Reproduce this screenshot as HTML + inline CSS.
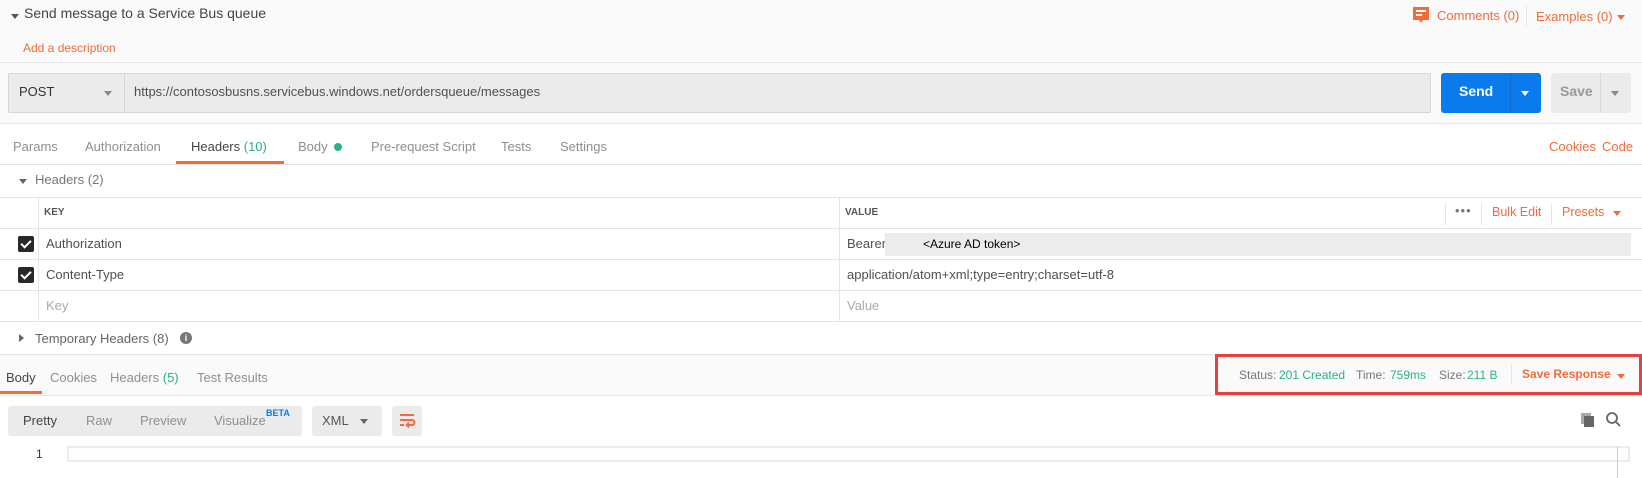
<!DOCTYPE html>
<html><head><meta charset="utf-8"><style>
*{margin:0;padding:0;box-sizing:border-box}
body{width:1642px;height:478px;overflow:hidden;background:#fff;font-family:"Liberation Sans",sans-serif;font-size:13px;color:#505050;position:relative}
.a{position:absolute;white-space:nowrap}
.o{color:#f26b3a}.g{color:#26b47f}.m{color:#8f8f8f}
.hl{position:absolute;height:1px;background:#e5e5e5}
.vl{position:absolute;width:1px;background:#e5e5e5}
.cb{position:absolute;width:16px;height:16px;background:#282828;border-radius:2px}
.cb:after{content:"";position:absolute;left:5px;top:2px;width:4px;height:8px;border:solid #fff;border-width:0 2px 2px 0;transform:rotate(45deg)}
.tri{position:absolute;width:0;height:0;border-left:4px solid transparent;border-right:4px solid transparent;border-top:5px solid #666}
</style></head><body>
<div class="a" style="left:0;top:0;width:1642px;height:65px;background:#fafafa"></div>
<div class="tri" style="left:11px;top:14px;border-top-color:#555"></div>
<div class="a" style="left:24px;top:5px;font-size:14px;color:#444">Send message to a Service Bus queue</div>
<div class="a o" style="left:23px;top:41px;font-size:12px">Add a description</div>
<svg class="a" style="left:1413px;top:7px" width="16" height="18"><path d="M0 0h16v13h-6l-2 3-2-3H0z" fill="#f26b3a"/><rect x="3" y="3" width="10" height="2" fill="#fff"/><rect x="3" y="7" width="6" height="2" fill="#fff"/></svg>
<div class="a o" style="left:1437px;top:8px">Comments (0)</div>
<div class="vl" style="left:1526px;top:5px;height:22px"></div>
<div class="a o" style="left:1536px;top:9px">Examples (0)</div>
<div class="tri" style="left:1617px;top:15px;border-top-color:#f26b3a"></div>
<div class="hl" style="left:0;top:62px;width:1642px;background:#e8e8e8"></div>
<div class="a" style="left:0;top:63px;width:1642px;height:60px;background:#fafafa"></div>
<div class="a" style="left:8px;top:73px;width:1423px;height:40px;background:#ebebeb;border:1px solid #d6d6d6;border-radius:2px"></div>
<div class="vl" style="left:124px;top:74px;height:38px;background:#d6d6d6"></div>
<div class="a" style="left:19px;top:84px;color:#333">POST</div>
<div class="tri" style="left:104px;top:91px;border-top-color:#888"></div>
<div class="a" style="left:134px;top:84px;color:#505050">https://contososbusns.servicebus.windows.net/ordersqueue/messages</div>
<div class="a" style="left:1441px;top:73px;width:100px;height:40px;background:#097bed;border-radius:3px"></div>
<div class="vl" style="left:1510px;top:73px;height:40px;background:#0a6bd0"></div>
<div class="a" style="left:1459px;top:83px;color:#fff;font-weight:bold;font-size:14px">Send</div>
<div class="tri" style="left:1521px;top:91px;border-top-color:#fff"></div>
<div class="a" style="left:1551px;top:73px;width:80px;height:40px;background:#ebebeb;border-radius:3px"></div>
<div class="vl" style="left:1600px;top:73px;height:40px;background:#d9d9d9"></div>
<div class="a" style="left:1560px;top:83px;color:#999;font-size:14px;font-weight:bold">Save</div>
<div class="tri" style="left:1611px;top:91px;border-top-color:#888"></div>
<div class="hl" style="left:0;top:123px;width:1642px;background:#e8e8e8"></div>
<div class="a m" style="left:13px;top:139px">Params</div>
<div class="a m" style="left:85px;top:139px">Authorization</div>
<div class="a" style="left:191px;top:139px;color:#444">Headers <span class="g">(10)</span></div>
<div class="a" style="left:176px;top:161px;width:108px;height:3px;background:#f26b3a"></div>
<div class="a m" style="left:298px;top:139px">Body</div>
<div class="a" style="left:334px;top:143px;width:8px;height:8px;border-radius:50%;background:#26b47f"></div>
<div class="a m" style="left:371px;top:139px">Pre-request Script</div>
<div class="a m" style="left:501px;top:139px">Tests</div>
<div class="a m" style="left:560px;top:139px">Settings</div>
<div class="a o" style="left:1549px;top:139px">Cookies</div>
<div class="a o" style="left:1602px;top:139px">Code</div>
<div class="hl" style="left:0;top:164px;width:1642px"></div>
<div class="tri" style="left:19px;top:179px"></div>
<div class="a m" style="left:35px;top:172px;color:#777">Headers (2)</div>
<div class="hl" style="left:0;top:197px;width:1642px"></div>
<div class="hl" style="left:0;top:228px;width:1642px"></div>
<div class="hl" style="left:0;top:259px;width:1642px"></div>
<div class="hl" style="left:0;top:290px;width:1642px"></div>
<div class="hl" style="left:0;top:321px;width:1642px"></div>
<div class="vl" style="left:38px;top:197px;height:124px"></div>
<div class="vl" style="left:839px;top:197px;height:124px"></div>
<div class="a" style="left:44px;top:207px;font-size:10px;font-weight:bold;color:#555">KEY</div>
<div class="a" style="left:845px;top:207px;font-size:10px;font-weight:bold;color:#555">VALUE</div>
<div class="vl" style="left:1445px;top:203px;height:22px"></div>
<div class="a" style="left:1455px;top:203px;color:#777;font-size:13px;letter-spacing:1px">•••</div>
<div class="vl" style="left:1481px;top:203px;height:22px"></div>
<div class="a o" style="left:1492px;top:205px;font-size:12.5px">Bulk Edit</div>
<div class="vl" style="left:1551px;top:203px;height:22px"></div>
<div class="a o" style="left:1562px;top:205px;font-size:12.5px">Presets</div>
<div class="tri" style="left:1613px;top:211px;border-top-color:#f26b3a"></div>
<div class="cb" style="left:18px;top:236px"></div>
<div class="a" style="left:46px;top:236px">Authorization</div>
<div class="a" style="left:847px;top:236px">Bearer</div>
<div class="a" style="left:885px;top:233px;width:746px;height:23px;background:#ececec"></div>
<div class="a" style="left:923px;top:237px;color:#000;font-size:12px">&lt;Azure AD token&gt;</div>
<div class="cb" style="left:18px;top:267px"></div>
<div class="a" style="left:46px;top:267px">Content-Type</div>
<div class="a" style="left:847px;top:267px">application/atom+xml;type=entry;charset=utf-8</div>
<div class="a" style="left:46px;top:298px;color:#aaa">Key</div>
<div class="a" style="left:847px;top:298px;color:#aaa">Value</div>
<div class="a" style="left:19px;top:334px;width:0;height:0;border-top:4px solid transparent;border-bottom:4px solid transparent;border-left:5px solid #666"></div>
<div class="a" style="left:35px;top:331px;color:#666">Temporary Headers (8)</div>
<div class="a" style="left:180px;top:332px;width:12px;height:12px;border-radius:50%;background:#777;color:#fff;font-size:9px;font-weight:bold;text-align:center;line-height:12px">i</div>
<div class="hl" style="left:0;top:354px;width:1642px"></div>
<div class="a" style="left:0;top:355px;width:1642px;height:40px;background:#fafafa"></div>
<div class="a" style="left:6px;top:370px;color:#444">Body</div>
<div class="a" style="left:0;top:391px;width:42px;height:3px;background:#f26b3a"></div>
<div class="a m" style="left:50px;top:370px">Cookies</div>
<div class="a m" style="left:110px;top:370px">Headers <span class="g">(5)</span></div>
<div class="a m" style="left:197px;top:370px">Test Results</div>
<div class="hl" style="left:0;top:395px;width:1642px"></div>
<div class="a" style="left:1215px;top:354px;width:427px;height:41px;border:3px solid #e8403f"></div>
<div class="a" style="left:1239px;top:368px;font-size:12px;color:#777">Status:</div>
<div class="a g" style="left:1279px;top:368px;font-size:12px">201 Created</div>
<div class="a" style="left:1356px;top:368px;font-size:12px;color:#777">Time:</div>
<div class="a g" style="left:1390px;top:368px;font-size:12px">759ms</div>
<div class="a" style="left:1439px;top:368px;font-size:12px;color:#777">Size:</div>
<div class="a g" style="left:1467px;top:368px;font-size:12px">211 B</div>
<div class="vl" style="left:1511px;top:364px;height:20px"></div>
<div class="a o" style="left:1522px;top:367px;font-weight:bold;font-size:12px">Save Response</div>
<div class="tri" style="left:1617px;top:374px;border-top-color:#f26b3a"></div>
<div class="a" style="left:8px;top:406px;width:294px;height:30px;background:#ebebeb;border-radius:3px"></div>
<div class="a" style="left:23px;top:413px;color:#444">Pretty</div>
<div class="a m" style="left:86px;top:413px">Raw</div>
<div class="a m" style="left:140px;top:413px">Preview</div>
<div class="a m" style="left:214px;top:413px">Visualize</div>
<div class="a" style="left:266px;top:408px;font-size:9px;font-weight:bold;color:#097bed">BETA</div>
<div class="a" style="left:312px;top:406px;width:70px;height:30px;background:#ebebeb;border-radius:3px"></div>
<div class="a" style="left:322px;top:413px;color:#555">XML</div>
<div class="tri" style="left:360px;top:419px;border-top-color:#666"></div>
<div class="a" style="left:392px;top:406px;width:30px;height:30px;background:#ebebeb;border-radius:3px"></div>
<svg class="a" style="left:398px;top:412px" width="18" height="18"><path d="M2 3h14M2 8h12a2.5 2.5 0 0 1 0 5h-4M2 13h4" stroke="#f26b3a" stroke-width="2" fill="none"/><path d="M11 10.5l-2.5 2.5 2.5 2.5" stroke="#f26b3a" stroke-width="1.6" fill="none"/></svg>
<svg class="a" style="left:1580px;top:412px" width="16" height="16"><rect x="1" y="1" width="10" height="11" fill="#aaa"/><rect x="4" y="4" width="10" height="11" fill="#666"/></svg>
<svg class="a" style="left:1605px;top:411px" width="17" height="17"><circle cx="7" cy="7" r="5" stroke="#666" stroke-width="1.8" fill="none"/><path d="M10.5 10.5l4.5 4.5" stroke="#666" stroke-width="1.8"/></svg>
<div class="a" style="left:36px;top:447px;color:#1a3a7a;font-size:12px">1</div>
<div class="a" style="left:67px;top:446px;width:1563px;height:16px;border:2px solid #ececec;background:#fefefc"></div>
<div class="vl" style="left:1617px;top:446px;height:32px;background:#ccc"></div>
</body></html>
